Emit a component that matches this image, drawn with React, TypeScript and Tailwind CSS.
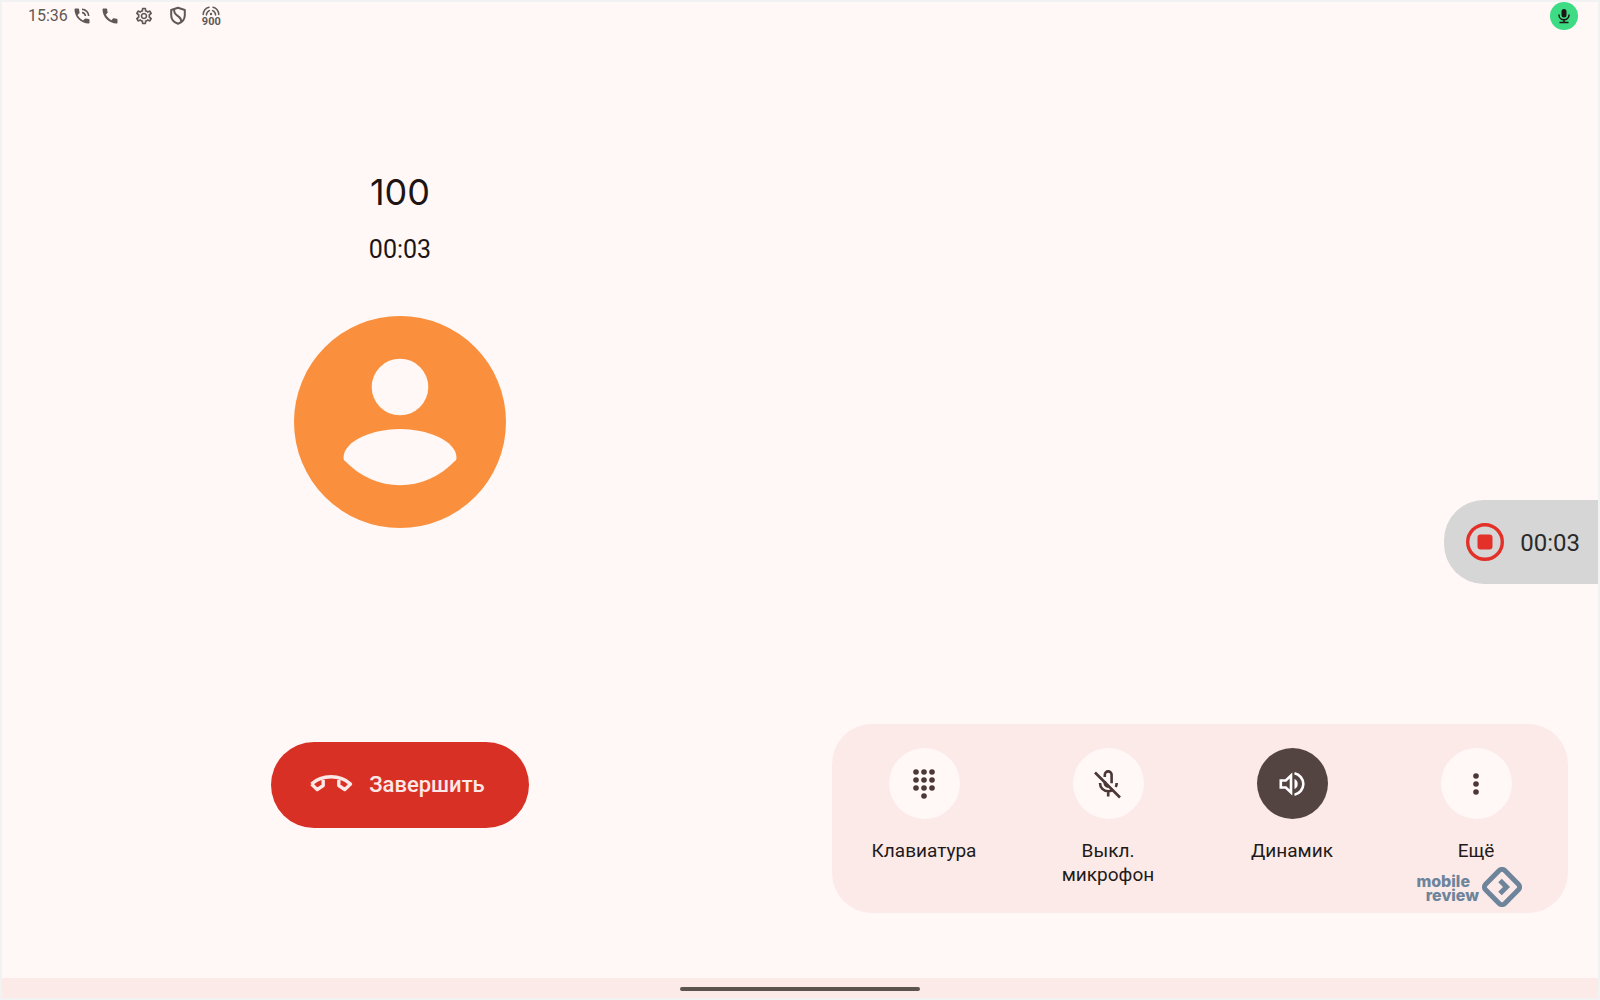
import { useState, type ReactNode } from "react";
import { MdCall, MdOutlineSettings, MdPhoneInTalk } from "react-icons/md";

function ShieldIcon() {
  return (
    <svg className="size-5" viewBox="0 0 20 20" fill="none" stroke="currentColor" strokeWidth="2" strokeLinejoin="round">
      <path d="M10 1.8 16.8 4v5.2c0 4-2.800 7.200-6.800 8.600-4-1.400-6.800-4.600-6.800-8.600V4Z" />
      <path d="M6.200 3.400c-.5 3 .9 4.800 3.400 6.400 2.500 1.600 4 3.600 3.400 6.200" />
    </svg>
  );
}

function SignalIcon() {
  return (
    <svg className="h-[10px] w-[18px]" viewBox="0 0 18 10" fill="none" stroke="currentColor" strokeWidth="1.500" strokeLinecap="round">
      <path d="M1.200 8.500C1.500 4.500 3.800 2 7 1.200M11 1.200c3.200.8 5.500 3.300 5.800 7.300" />
      <path d="M4.400 9c.1-2.200 1.200-3.700 3-4.400M13.600 9c-.1-2.200-1.200-3.700-3-4.400" />
      <circle cx="9" cy="8" r="1.200" fill="currentColor" stroke="none" />
    </svg>
  );
}

function MicIcon() {
  return (
    <svg className="size-4" viewBox="0 0 16 16" fill="none" stroke="currentColor" strokeWidth="1.500">
      <rect x="5.500" y="1" width="5" height="8.500" rx="2.500" fill="currentColor" stroke="none" />
      <path d="M3 6.500v.8a5 4.500 0 0 0 10 0v-.8M8 11.500v2.700M3.500 14.400h9" />
    </svg>
  );
}

function HangUpIcon() {
  return (
    <svg className="h-[20px] w-[44px]" viewBox="0 0 44 20" fill="none" stroke="currentColor" strokeWidth="3.400" strokeLinejoin="round">
      <path d="M2.500 10C13 .4 31 .4 41.500 10L35.800 15.600 29.800 11.500V4M2.500 10 8.200 15.600 14.200 11.500V4" />
    </svg>
  );
}

function KeypadIcon() {
  const dots = [
    [4, 4], [12, 4], [20, 4],
    [4, 12], [12, 12], [20, 12],
    [4, 20], [12, 20], [20, 20],
    [12, 28],
  ];
  return (
    <svg className="h-[32px] w-[24px]" viewBox="0 0 24 32" fill="currentColor">
      {dots.map(([x, y]) => (
        <circle key={`${x}-${y}`} cx={x} cy={y} r="2.800" />
      ))}
    </svg>
  );
}

function MicOffIcon() {
  return (
    <svg className="size-8" viewBox="0 0 32 32" fill="none" stroke="currentColor" strokeWidth="2.600">
      <path d="M3 4.500 28 29.500" />
      <path d="M12.800 9V6.800a3.400 3.400 0 0 1 6.800 0v8.400" />
      <path d="M8 15c0 4.800 3.500 8.300 8.200 8.300 1.600 0 3-.4 4.200-1.200M16.200 23v5.500M24.700 15c0 1.500-.3 2.800-.9 4" />
      <path d="M12.800 13v2.200a3.400 3.400 0 0 0 3.400 3.400" />
    </svg>
  );
}

function SpeakerIcon() {
  return (
    <svg className="size-8" viewBox="0 0 32 32" fill="none" stroke="currentColor" strokeWidth="2.600">
      <path d="M4.800 12.500h5L15 7.500v17l-5.200-5h-5Z" />
      <path d="M18.500 5.300a10.900 10.900 0 0 1 0 21.400" />
      <path d="M18.500 11a5.500 5.500 0 0 1 0 10Z" fill="currentColor" stroke="none" />
    </svg>
  );
}

function MoreIcon() {
  return (
    <svg className="size-8" viewBox="0 0 32 32" fill="currentColor">
      <circle cx="16" cy="8" r="2.800" />
      <circle cx="16" cy="16" r="2.800" />
      <circle cx="16" cy="24" r="2.800" />
    </svg>
  );
}

function StatusBar() {
  return (
    <header className="flex h-7 items-center justify-between pr-5 pl-[26px] text-[#5f5856]">
      <div className="flex items-center">
        <span className="font-[Roboto,sans-serif] text-base">15:36</span>
        <MdPhoneInTalk className="ml-1 size-5" />
        <MdCall className="ml-2 size-5" />
        <MdOutlineSettings className="ml-3.5 size-5" />
        <span className="ml-3.5">
          <ShieldIcon />
        </span>
        <span className="ml-3.5 flex flex-col items-center">
          <SignalIcon />
          <span className="font-[Roboto,sans-serif] text-[11px] leading-[11px] font-bold">900</span>
        </span>
      </div>
      <span className="flex size-7 items-center justify-center rounded-full bg-[#3ddc84] text-[#1d1413]">
        <MicIcon />
      </span>
    </header>
  );
}

function Avatar() {
  return (
    <svg className="size-[212px]" viewBox="0 0 212 212" role="img" aria-label="100">
      <circle cx="106" cy="106" r="106" fill="#fa903e" />
      <circle cx="106" cy="71" r="28.300" fill="#fff8f7" />
      <path
        d="M49.500 142C49.500 124 80 113 106 113s56.500 11 56.500 29c0 1-.2 1.600-.8 2.300C146 161 126 169.300 106 169.300S66 161 50.300 144.300c-.6-.7-.8-1.300-.8-2.300Z"
        fill="#fff8f7"
      />
    </svg>
  );
}

type ActionProps = {
  label: string;
  icon: ReactNode;
  active?: boolean;
  onClick?: () => void;
};

function Action({ label, icon, active = false, onClick }: ActionProps) {
  return (
    <button
      onClick={onClick}
      aria-pressed={active}
      className="flex cursor-pointer flex-col items-center text-center text-[#221a19]"
    >
      <span
        className={`flex size-[71px] items-center justify-center rounded-full ${
          active ? "bg-[#534341] text-white" : "bg-[#fff8f7] text-[#4b3735]"
        }`}
      >
        {icon}
      </span>
      <span className="mt-5 max-w-[120px] text-[19px] leading-6">{label}</span>
    </button>
  );
}

function Watermark() {
  return (
    <div className="absolute right-[46px] bottom-[6px] flex items-center gap-[3px] text-[#6d849b]">
      <div className="pt-0.5 text-right font-[Inter,sans-serif] text-base leading-[14px] font-extrabold">
        <p className="pr-[9px]">mobile</p>
        <p>review</p>
      </div>
      <svg className="size-10" viewBox="0 0 40 40" fill="none" stroke="currentColor">
        <rect x="6.400" y="6.400" width="27.200" height="27.200" rx="4" strokeWidth="5" transform="rotate(45 20 20)" />
        <path d="m18 13.500 6.500 6.500-6.500 6.500" strokeWidth="5" />
      </svg>
    </div>
  );
}

export default function App() {
  const [muted, setMuted] = useState(false);
  const [speaker, setSpeaker] = useState(true);

  return (
    <div className="relative flex min-h-screen flex-col border-2 border-[#f1f2f2] bg-[#fff8f7] font-[Roboto,'Noto_Sans',sans-serif] text-[#1d1413]">
      <StatusBar />

      <main className="grid flex-1 grid-cols-2">
        <section className="flex flex-col items-center pt-[142px] pr-0.5 pb-[150px]">
          <h1 className="font-[Inter,sans-serif] text-[36px] leading-10">100</h1>
          <p className="mt-[22px] text-[25px] leading-8">00:03</p>
          <div className="mt-[50px]">
            <Avatar />
          </div>
          <button className="mt-auto flex h-[86px] cursor-pointer items-center gap-4 rounded-full bg-[#d93025] pr-11 pb-0.5 pl-[38px] text-[22px] font-medium text-[#fce8e6]">
            <HangUpIcon />
            Завершить
          </button>
        </section>

        <section className="flex flex-col pr-[30px] pb-[65px] pl-8">
          <div className="relative mt-auto grid grid-cols-4 items-start rounded-[40px] bg-[#fceae8] pt-6 pb-[26px]">
            <Action label="Клавиатура" icon={<KeypadIcon />} />
            <Action
              label="Выкл. микрофон"
              icon={<MicOffIcon />}
              active={muted}
              onClick={() => setMuted(!muted)}
            />
            <Action
              label="Динамик"
              icon={<SpeakerIcon />}
              active={speaker}
              onClick={() => setSpeaker(!speaker)}
            />
            <Action label="Ещё" icon={<MoreIcon />} />
            <Watermark />
          </div>
        </section>
      </main>

      <footer className="flex h-5 items-end justify-center bg-[#fceae8] pb-[7px]">
        <div className="h-1 w-60 rounded-full bg-[#5c524e]" />
      </footer>

      <button
        aria-label="Остановить запись"
        className="absolute top-1/2 right-0 flex h-[84px] cursor-pointer items-center gap-4 rounded-l-[40px] bg-[#d6d6d6] pr-[18px] pl-[22px] text-[#2a2a2a]"
      >
        <svg className="size-[38px]" viewBox="0 0 38 38">
          <circle cx="19" cy="19" r="17.300" fill="none" stroke="#e33029" strokeWidth="3.400" />
          <rect x="11.500" y="11.500" width="15" height="15" rx="3" fill="#e33029" />
        </svg>
        <span className="pt-0.5 text-[24px]">00:03</span>
      </button>
    </div>
  );
}
